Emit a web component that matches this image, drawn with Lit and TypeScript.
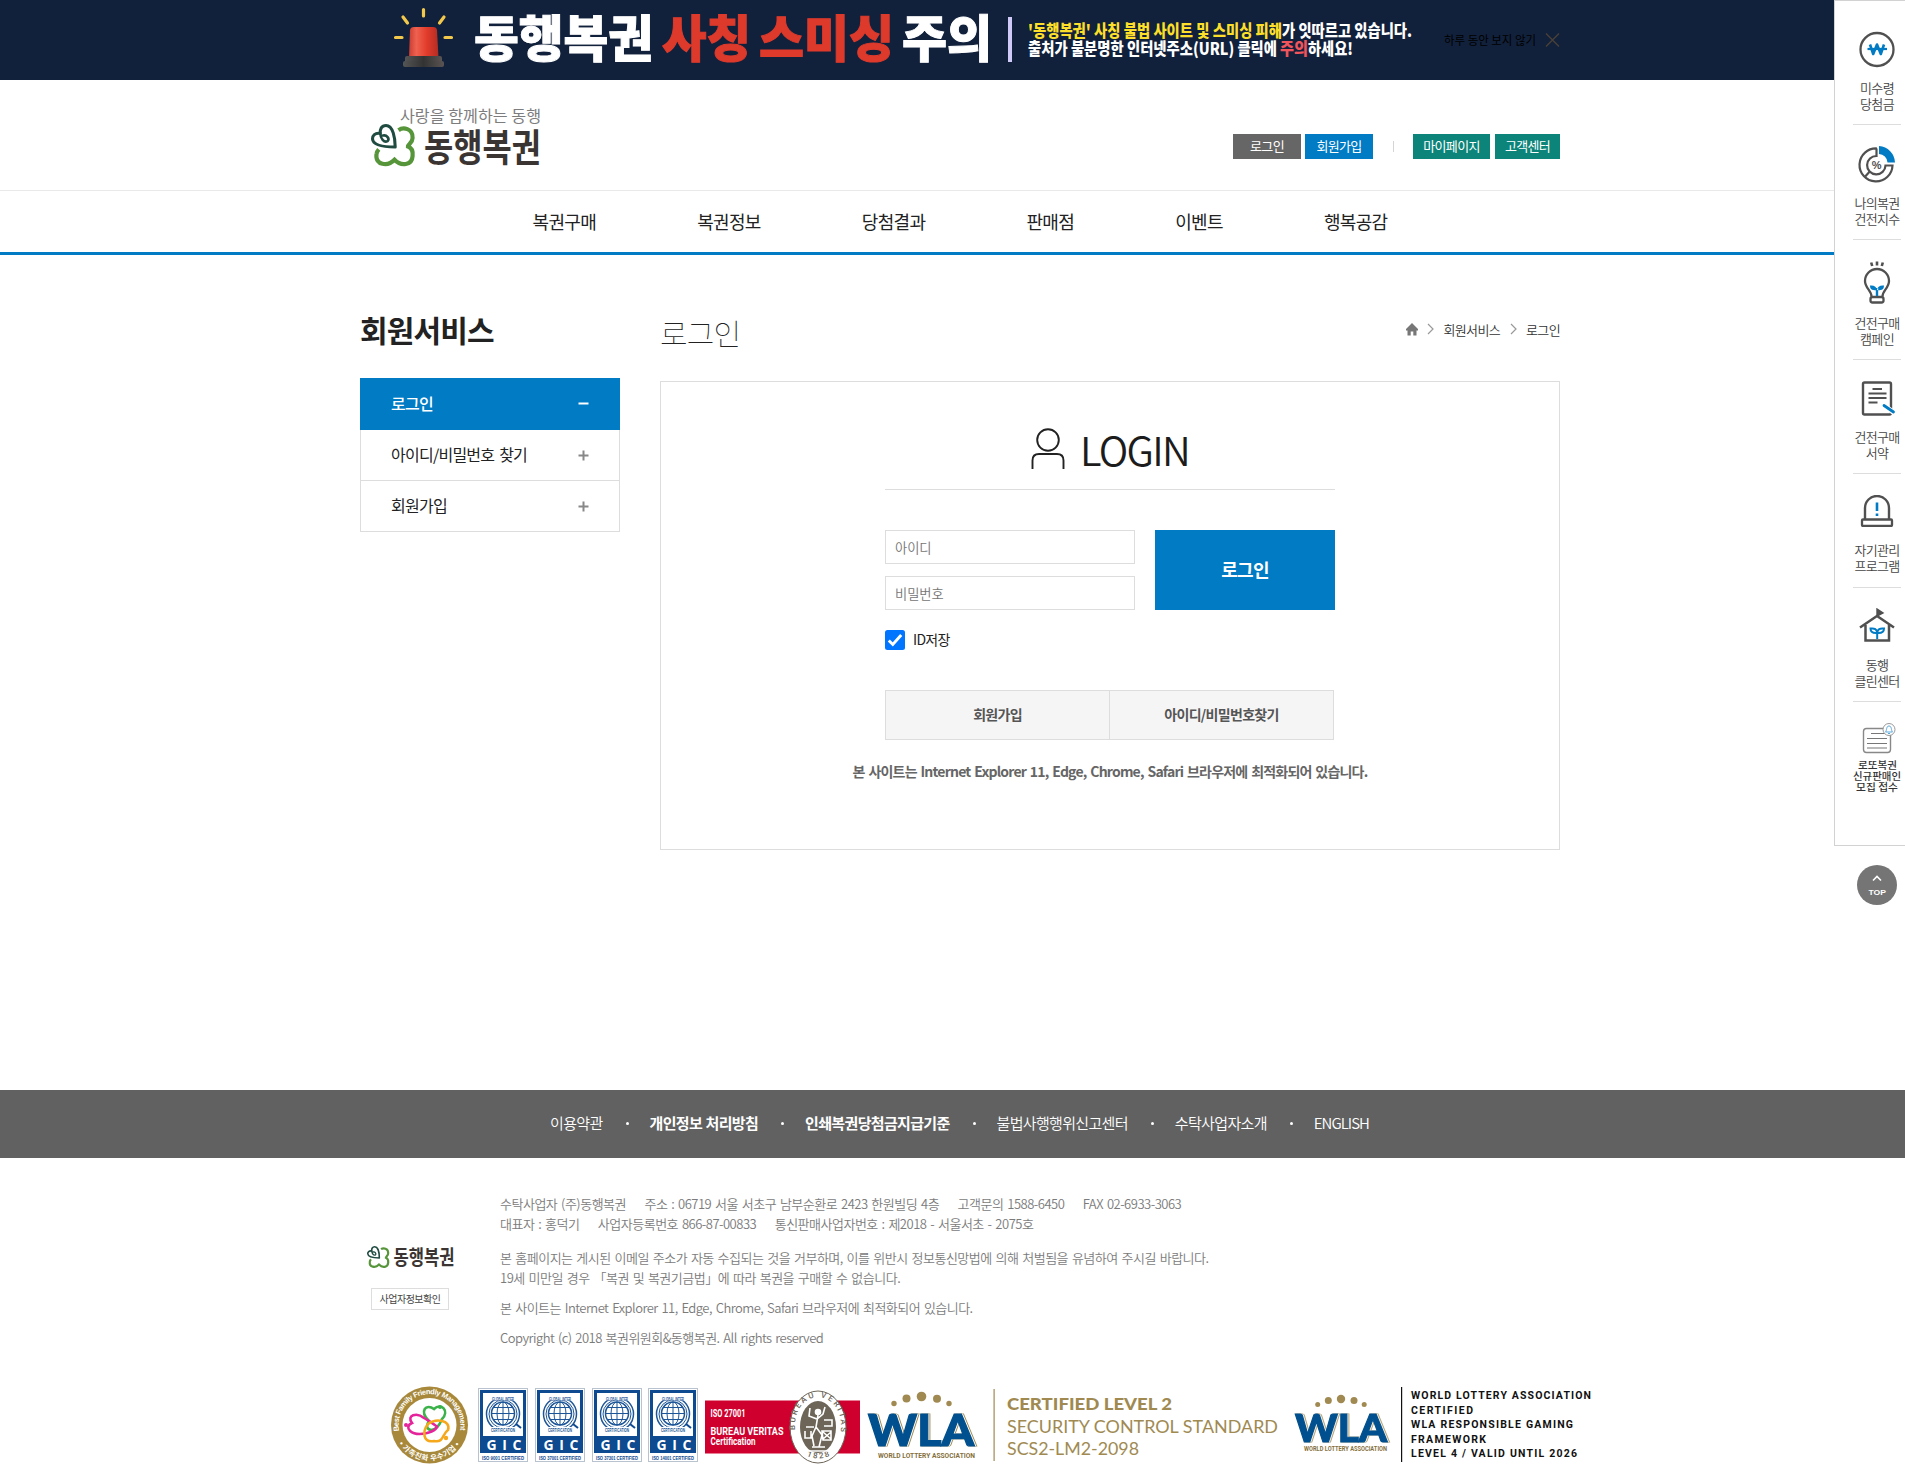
import { LitElement, html, css, svg } from "lit";
import { customElement } from "lit/decorators.js";

const INK = "#505050";
const BLUE = "#007bc4";
const GOLD = "#a08a52";

const clover = svg`
  <path d="M27.500 6.200C32 3 42 4 41.600 14 41.500 19 37 20 37 22.600 41 24 42 28 41.600 32 41 41.500 30 42.600 23.500 35.800 17 42.600 3.800 41.500 5.500 30 5.700 28.300 6.400 27 7.800 25.400" fill="none" stroke="#56953a" stroke-width="4.200"/>
  <path d="M24.200 23C24.200 14 22 1.500 15 1.500 10.500 1.500 8.800 5.200 9.300 9.500 4 8.500 1.300 11.800 1.500 15 2 21 12 23 24.200 23Z" fill="none" stroke="#1f4b40" stroke-width="3.100" stroke-linejoin="round"/>
  <path d="M9.300 9.500C9.500 14.500 13 19 16.500 17.200 19 15 15.800 10.500 12 11.500" fill="none" stroke="#1f4b40" stroke-width="2.600" stroke-linecap="round"/>`;

type Item = { icon: unknown; lines: string[]; h: number; pad: number; gap: number };

const sideItems: Item[] = [
  {
    lines: ["미수령", "당첨금"], h: 124, pad: 30, gap: 12,
    icon: svg`<svg width="38" height="37" viewBox="0 0 38 37">
      <circle cx="19" cy="18.500" r="16.500" fill="none" stroke="${INK}" stroke-width="2.300"/>
      <path d="M12 13.500l3.200 9.500 3.800-9.500 3.800 9.500 3.200-9.500" fill="none" stroke="${BLUE}" stroke-width="2.600" stroke-linejoin="round"/>
      <path d="M9.500 18H29" stroke="${BLUE}" stroke-width="2.200"/></svg>`,
  },
  {
    lines: ["나의복권", "건전지수"], h: 115, pad: 20, gap: 12,
    icon: svg`<svg width="38" height="38" viewBox="0 0 38 38">
      <path d="M19 3.500A16.500 16.500 0 1 0 34.500 20.500H27.500A9.200 9.200 0 1 1 18.500 11V3.500Z" fill="none" stroke="${INK}" stroke-width="2.200"/>
      <path d="M7.200 31.500l5-5.500" stroke="${INK}" stroke-width="2.200"/>
      <path d="M21 1A17 17 0 0 1 37 17.500H29.500A9 9 0 0 0 21 9Z" fill="${BLUE}"/>
      <text x="18.700" y="24" text-anchor="middle" class="pct">%</text></svg>`,
  },
  {
    lines: ["건전구매", "캠페인"], h: 120, pad: 21, gap: 11,
    icon: svg`<svg width="38" height="43" viewBox="0 0 38 43">
      <path d="M19 .5V4.500M13.200 1.500l1 3.500M24.800 1.500l-1 3.500" stroke="${INK}" stroke-width="2.600"/>
      <path d="M13.500 35.500C13.500 29.500 7 27 7 20A12 12 0 0 1 31 20C31 27 24.500 29.500 24.500 35.500" fill="none" stroke="${INK}" stroke-width="2.300"/>
      <rect x="12.500" y="36" width="13" height="5.500" rx="2" fill="none" stroke="${INK}" stroke-width="2.300"/>
      <path d="M19 29C12.500 30 12.200 27 12 24.500 16 24 18.500 25.500 19 29ZM19 29C25.500 30 25.800 27 26 24.500 22 24 19.500 25.500 19 29ZM17.800 27h2.400v8h-2.400z" fill="${BLUE}"/></svg>`,
  },
  {
    lines: ["건전구매", "서약"], h: 114, pad: 20, gap: 13,
    icon: svg`<svg width="38" height="36" viewBox="0 0 38 36">
      <rect x="5" y="2.500" width="28" height="32" rx="1.500" fill="none" stroke="${INK}" stroke-width="2.400"/>
      <path d="M14.500 9H24M10.500 13.500H28.500M10.500 18H28.500M10.500 22.500H19.500" stroke="${INK}" stroke-width="2.200"/>
      <path d="M25.500 25L35.500 32.500" stroke="#fff" stroke-width="5"/><path d="M26 25.500L35.500 32" stroke="${BLUE}" stroke-width="2.800" stroke-linecap="round"/></svg>`,
  },
  {
    lines: ["자기관리", "프로그램"], h: 114, pad: 21, gap: 15,
    icon: svg`<svg width="38" height="32" viewBox="0 0 38 32">
      <path d="M7 24V13A12 12 0 0 1 31 13V24" fill="none" stroke="${INK}" stroke-width="2.400"/>
      <rect x="4" y="24.500" width="30" height="6.500" rx="1" fill="none" stroke="${INK}" stroke-width="2.300"/>
      <path d="M19 7.500V16M19 18.500V21" stroke="${BLUE}" stroke-width="2.600"/></svg>`,
  },
  {
    lines: ["동행", "클린센터"], h: 114, pad: 20, gap: 15,
    icon: svg`<svg width="38" height="34" viewBox="0 0 38 34">
      <path d="M2 19.500L19 8 36 19.500M7.500 17V32.500H31V17" fill="none" stroke="${INK}" stroke-width="2.500"/>
      <path d="M19 9V1L25 5 19 8Z" fill="${INK}" stroke="${INK}" stroke-width="1.400"/>
      <path d="M19.200 31V23.500M19.200 25C13.500 25.500 12.500 22.500 12.500 20.500 16.500 20 19 21 19.200 25ZM19.200 25C25 25.500 26 22.500 26 20.500 22 20 19.500 21 19.200 25Z" fill="none" stroke="${BLUE}" stroke-width="2"/></svg>`,
  },
];

const gicCodes: [number, string][] = [
  [478, "ISO 9001 CERTIFIED"], [535, "ISO 37001 CERTIFIED"], [592, "ISO 37301 CERTIFIED"], [648, "ISO 14001 CERTIFIED"],
];

const gic = (x: number, label: string) => svg`<g transform="translate(${x} 1388)">
  <rect x=".5" y=".5" width="49" height="73" fill="#fff" stroke="#b9c3d0"/>
  <rect x="2" y="2" width="46" height="63" fill="#0d4a90"/>
  <rect x="5" y="5" width="40" height="43" fill="#fff"/>
  <circle cx="25" cy="26" r="16.500" fill="none" stroke="#1d5698" stroke-width="1.500"/>
  <circle cx="25" cy="26" r="14" fill="none" stroke="#1d5698" stroke-width="1"/>
  <rect x="14" y="7.500" width="22" height="5" fill="#fff"/><rect x="14" y="39" width="22" height="5" fill="#fff"/>
  <text x="14" y="12.500" textLength="22" lengthAdjust="spacingAndGlyphs" class="tiny">GLOBAL INTER</text>
  <text x="13" y="43.500" textLength="24" lengthAdjust="spacingAndGlyphs" class="tiny">CERTIFICATION</text>
  <circle cx="25" cy="25.500" r="11.500" fill="#fff" stroke="#1d5698" stroke-width="1.500"/>
  <path d="M25 14v23M13.500 25.500h23M15.500 19.500h19M15.500 31.500h19" stroke="#1d5698" stroke-width="1"/>
  <ellipse cx="25" cy="25.500" rx="6" ry="11.500" fill="none" stroke="#1d5698" stroke-width="1"/>
  <path d="M38 36l5 4" stroke="#0d4a90" stroke-width="2"/>
  <text x="8.500" y="61.500" textLength="35" class="gic">GIC</text>
  <text x="4" y="71.500" textLength="42" lengthAdjust="spacingAndGlyphs" class="iso">${label}</text>
</g>`;

const wla = (x: number, w: number, top: number, h: number) => svg`
  <g transform="translate(${x} ${top}) scale(${w / 108} ${h / 31})">
    <text x="0" y="31" textLength="106" lengthAdjust="spacingAndGlyphs" class="wla">WLA</text>
  </g>`;

@customElement("app-root")
export class AppRoot extends LitElement {
  static styles = css`
    :host {
      display: block; position: relative; width: 1905px; height: 1467px; overflow: hidden;
      background: #fff; color: #222; font-family: "Noto Sans CJK KR", "Noto Sans", sans-serif; font-size: 13px;
    }
    * { box-sizing: border-box; }
    svg { display: block; flex: none; }
    .wrap { width: 1200px; margin-left: 360px; }
    .banner { height: 80px; background: #12213b; }
    .banner-in { display: flex; }
    .b-big { font-weight: 900; font-size: 50px; stroke-width: 1; }
    .b-small { font-weight: 900; font-size: 16.500px; }
    .b-close { font-size: 12px; fill: #000; }
    .head { height: 110px; display: flex; justify-content: space-between; }
    .util { display: flex; align-items: center; margin-top: 54px; height: 25px; font-size: 13px; letter-spacing: -0.650px; color: #fff; }
    .util span { height: 25px; line-height: 24px; text-align: center; }
    .u1 { width: 68px; background: #666; margin-right: 4px; }
    .u2 { width: 68px; background: #007bc4; margin-right: 20px; }
    .util .bar { width: 1px; height: 11px; background: #d5d5d5; margin-right: 19px; }
    .u3 { width: 77px; background: #0c8479; margin-right: 5px; }
    .u4 { width: 65px; background: #0c8479; }
    .nav { border-top: 1px solid #e9e9e9; border-bottom: 3px solid #007bc4; height: 65px; }
    .nav-in { display: flex; gap: 101px; padding-left: 172.500px; font-size: 18px; font-weight: 400; letter-spacing: -0.650px; line-height: 61px; }
    .main { display: flex; gap: 40px; height: 835px; }
    .aside { width: 260px; padding-top: 49px; }
    .aside h2 { margin: 0; font-size: 30px; line-height: 50px; font-weight: 700; letter-spacing: -0.875px; height: 74px; }
    .menu { display: flex; flex-direction: column; font-size: 16px; letter-spacing: -0.750px; word-spacing: 2px; }
    .mi { display: flex; justify-content: space-between; align-items: center; height: 51px; padding: 0 30px; border: 1px solid #ddd; border-top: 0; color: #222; font-weight: 400; }
    .mi span { padding-bottom: 2px; }
    .mi.on { height: 52px; background: #007bc4; border-color: #007bc4; color: #fff; font-weight: 500; }
    .content { width: 900px; padding-top: 49px; }
    .title-row { display: flex; justify-content: space-between; height: 77px; }
    .title-row h3 { margin: 0; font-size: 30px; font-weight: 100; letter-spacing: -0.900px; line-height: 56px; }
    .crumb { display: flex; align-items: center; gap: 9.500px; height: 50px; font-size: 13px; font-weight: 350; letter-spacing: -0.650px; color: #333; }
    .box { border: 1px solid #ddd; height: 469px; display: flex; flex-direction: column; align-items: center; }
    .form { width: 450px; display: flex; flex-direction: column; }
    .login-h { display: flex; justify-content: center; height: 108px; border-bottom: 1px solid #ddd; padding-top: 46px; gap: 15px; }
    .login-h span { font-size: 40px; font-weight: 350; letter-spacing: -1.700px; line-height: 43px; color: #1c1c1c; }
    .fields { display: flex; justify-content: space-between; margin-top: 40px; height: 80px; }
    .col { display: flex; flex-direction: column; gap: 12px; }
    .in { width: 250px; height: 34px; border: 1px solid #ddd; padding-left: 9px; line-height: 33px; font-size: 13.300px; letter-spacing: -0.100px; color: #757575; font-weight: 350; }
    .btn { width: 180px; background: #007bc4; color: #fff; font-size: 18px; font-weight: 700; letter-spacing: -0.800px; text-align: center; line-height: 78px; }
    .save { display: flex; align-items: center; gap: 8px; margin-top: 20px; height: 20px; font-size: 14px; letter-spacing: -0.700px; color: #222; }
    .save span { padding-bottom: 3px; }
    .two { display: flex; width: 449px; height: 50px; margin-top: 40px; border: 1px solid #ddd; background: #f5f5f5; line-height: 46px; text-align: center; font-size: 14px; font-weight: 700; letter-spacing: -0.700px; color: #555; }
    .two span { flex: 1; }
    .two span + span { border-left: 1px solid #ddd; }
    .opt { margin-top: 19px; line-height: 24px; font-size: 14px; font-weight: 700; letter-spacing: -0.800px; word-spacing: 1.400px; color: #666; white-space: nowrap; }
    .fnav { height: 68px; background: #616161; color: #fff; }
    .fnav-in { display: flex; align-items: center; padding-left: 190px; height: 64px; font-size: 15px; font-weight: 350; letter-spacing: -0.668px; white-space: nowrap; }
    .fnav-in b { font-weight: 700; word-spacing: 0.800px; }
    .fnav-in .en { letter-spacing: -0.950px; }
    .fnav-in i { width: 3px; height: 3px; border-radius: 50%; background: #fff; margin: 2px 20.800px 0 23.200px; }
    .foot { display: flex; height: 220px; }
    .fl { width: 140px; padding: 88px 0 0 7px; display: flex; flex-direction: column; gap: 20px; }
    .flogo { overflow: visible; }
    .chk { width: 78px; height: 22px; margin-left: 4px; border: 1px solid #ddd; text-align: center; font-size: 10px; line-height: 20px; letter-spacing: -0.500px; color: #444; }
    .fr { padding-top: 36px; line-height: 20px; font-size: 13px; font-weight: 350; letter-spacing: -0.500px; word-spacing: 1.400px; color: #7b7b7b; white-space: nowrap; }
    .fr p { margin: 0 0 14px; }
    .fr .t { margin-bottom: 10px; }
    .fr .lat { letter-spacing: -0.530px; }
    .fr p > span { margin-right: 18.500px; }
    .logos { display: flex; height: 89px; }
    .pct { font: 700 11px "Liberation Sans", sans-serif; fill: #505050; }
    .side { position: absolute; right: 0; top: 0; width: 71px; height: 846px; background: #fff; border: 1px solid #d2d2d2; border-right: 0; padding-left: 18px; }
    .si { width: 48px; display: flex; flex-direction: column; align-items: center; border-bottom: 1px solid #ddd; }
    .si p { margin: 0; text-align: center; font-size: 13px; font-weight: 350; line-height: 16px; letter-spacing: -0.650px; color: #444; white-space: nowrap; }
    .last { padding-top: 20px; }
    .new { font-size: 10px; font-weight: 500; fill: #333; }
    .top { position: absolute; left: 1857px; top: 865px; }
    .topt { font: 700 8px "Liberation Sans", sans-serif; fill: #fff; }
    .slog { font-size: 16px; fill: #7d7d7d; }
    .name { font-weight: 700; font-size: 38px; fill: #3a3532; }
    .name.sm { font-size: 20px; }
    .tiny { font: 700 5px "Liberation Sans", sans-serif; fill: #1d5698; }
    .iso { font: 700 5px "Liberation Sans", sans-serif; fill: #0d4a90; }
    .gic { font: 700 14px "Open Sans", sans-serif; fill: #fff; }
    .wla { font: 900 43px Lato, sans-serif; fill: #00508f; stroke: #00508f; stroke-width: 1.200; filter: drop-shadow(1.200px 0 0 #fff) drop-shadow(1.200px 0 0 #a08a52); }
    .cap { font: 700 8px Roboto, sans-serif; fill: #85703c; }
    .cap.sm { font-size: 7px; }
    .bv { font: 700 10px Roboto, sans-serif; fill: #fff; }
    .ring { font: 500 8px Roboto, sans-serif; fill: #6c6558; }
    .lv { font: 400 17.500px Lato, sans-serif; fill: #a08a52; }
    .lv.b { font-weight: 900; }
    .din { font: 700 10.500px Roboto, sans-serif; fill: #111; }
    .fam { font: 700 7.500px "Liberation Sans", sans-serif; fill: #fff; }
    .fam.k { font-family: "Noto Sans CJK KR", sans-serif; }
  `;

  private banner() {
    return html`<svg width="1200" height="80" viewBox="360 0 1200 80">
      <defs><linearGradient id="sg"><stop offset="0" stop-color="#c93d31"/><stop offset=".25" stop-color="#f0614f"/><stop offset=".6" stop-color="#e23c2c"/><stop offset="1" stop-color="#b42c22"/></linearGradient>
      <linearGradient id="sb"><stop offset="0" stop-color="#555"/><stop offset=".5" stop-color="#333"/><stop offset="1" stop-color="#5a5453"/></linearGradient></defs>
      <path d="M423.500 9.500V16M403 17l4.500 6M444 17l-4.500 6M395.500 37.500H402M445 37.500H451.500" stroke="#f2c94c" stroke-width="3.200" stroke-linecap="round"/>
      <path d="M410 30Q410.500 27 414 27H433Q436.500 27 437 30L438.500 58H409Z" fill="url(#sg)"/>
      <rect x="405" y="56" width="37" height="6.500" rx="2" fill="url(#sb)"/><rect x="403" y="61" width="41" height="6" rx="2" fill="url(#sb)"/>
      <text x="474" y="57" textLength="179" lengthAdjust="spacingAndGlyphs" class="b-big" fill="#fff" stroke="#fff">동행복권</text>
      <text x="662" y="57" textLength="89" lengthAdjust="spacingAndGlyphs" class="b-big" fill="#de3a2b" stroke="#de3a2b">사칭</text>
      <text x="759" y="57" textLength="135" lengthAdjust="spacingAndGlyphs" class="b-big" fill="#de3a2b" stroke="#de3a2b">스미싱</text>
      <text x="902" y="57" textLength="90" lengthAdjust="spacingAndGlyphs" class="b-big" fill="#fff" stroke="#fff">주의</text>
      <rect x="1008" y="17" width="4" height="45" fill="#cfcaf8"/>
      <text x="1028" y="36.500" textLength="254" lengthAdjust="spacingAndGlyphs" class="b-small" fill="#fbdf2a">'동행복권' 사칭 불법 사이트 및 스미싱 피해</text>
      <text x="1282" y="36.500" textLength="130" lengthAdjust="spacingAndGlyphs" class="b-small" fill="#fff">가 잇따르고 있습니다.</text>
      <text x="1028" y="54.500" textLength="249" lengthAdjust="spacingAndGlyphs" class="b-small" fill="#fff">출처가 불분명한 인터넷주소(URL) 클릭에</text>
      <text x="1280" y="54.500" textLength="28" lengthAdjust="spacingAndGlyphs" class="b-small" fill="#f2545b">주의</text>
      <text x="1308" y="54.500" textLength="45" lengthAdjust="spacingAndGlyphs" class="b-small" fill="#fff">하세요!</text>
      <text x="1444" y="45" textLength="92" lengthAdjust="spacingAndGlyphs" class="b-close">하루 동안 보지 않기</text>
      <path d="M1546 33.500l13 13M1559 33.500l-13 13" stroke="#4a4038" stroke-width="1.300"/>
    </svg>`;
  }

  private logo() {
    return html`<svg width="200" height="110" viewBox="360 80 200 110">
      <text x="400" y="121.500" textLength="141" lengthAdjust="spacingAndGlyphs" class="slog">사랑을 함께하는 동행</text>
      <g transform="translate(371 124)">${clover}</g>
      <text x="424" y="161" textLength="117" lengthAdjust="spacingAndGlyphs" class="name">동행복권</text>
    </svg>`;
  }

  private logos() {
    const dots = (pts: number[][]) => pts.map((p) => svg`<circle cx="${p[0]}" cy="${p[1]}" r="${p[2]}" fill="${GOLD}"/>`);
    return html`<svg width="1260" height="89" viewBox="360 1378 1260 89">
      <defs><path id="a1" d="M399.500 1433A31 31 0 1 1 459.500 1433"/><path id="a2" d="M397 1440A36 36 0 0 0 462 1440"/>
      <path id="a3" d="M795.500 1434C789 1385 847 1385 840.500 1434"/><path id="a4" d="M803 1454Q818 1463 834 1454"/></defs>
      <circle cx="429.500" cy="1425" r="38.500" fill="#a8893c"/><circle cx="429.500" cy="1425" r="27" fill="#fff"/>
      <text class="fam"><textPath href="#a1" textLength="108" startOffset="2">Best Family Friendly Management</textPath></text>
      <text class="fam k"><textPath href="#a2" textLength="72" startOffset="4">• 가족친화 우수기업 •</textPath></text>
      <g fill="none" stroke-width="2.600">
        <path d="M429 1421C419 1411 426 1403 434 1409 441 1402 450 1411 442 1419 440 1424 437 1430 431 1430 425 1429 427 1424 429 1421Z" stroke="#3cb24a"/>
        <path d="M427 1433C411 1437 403 1427 412 1423 406 1415 417 1412 424 1418 432 1423 436 1425 437 1427 434 1432 430 1432 427 1433Z" stroke="#e5249b"/>
        <path d="M428 1424C436 1418 451 1420 448 1430 442 1434 444 1443 434 1441 423 1443 422 1432 428 1424Z" stroke="#f5a81c"/>
      </g>
      <circle cx="440" cy="1407" r="2" fill="#3cb24a"/><circle cx="406" cy="1425" r="2" fill="#e5249b"/><circle cx="446" cy="1438" r="2.200" fill="#f5a81c"/>
      ${gicCodes.map(([x, l]) => gic(x, l))}
      <rect x="705" y="1400.500" width="155" height="53" fill="#cf002d"/>
      <ellipse cx="818" cy="1427" rx="28" ry="36" fill="#fff" stroke="#6c6558" stroke-width="1"/>
      <ellipse cx="818" cy="1427" rx="18" ry="26" fill="#6c6558"/>
      <text x="710.500" y="1416.500" textLength="35" lengthAdjust="spacingAndGlyphs" class="bv">ISO 27001</text>
      <text x="710.500" y="1434.500" textLength="73" lengthAdjust="spacingAndGlyphs" class="bv">BUREAU VERITAS</text>
      <text x="710.500" y="1445" textLength="45" lengthAdjust="spacingAndGlyphs" class="bv">Certification</text>
      <text class="ring"><textPath href="#a3" textLength="92" startOffset="4">BUREAU VERITAS</textPath></text>
      <text class="ring"><textPath href="#a4" textLength="24" startOffset="4">1828</textPath></text>
      <g stroke="#fff" fill="none" stroke-width="1.600">
        <circle cx="818" cy="1412" r="2.500" fill="#fff"/><path d="M818 1415l-2 12 6 8-3 12M816 1427l-4 9 2 10M810 1408l-1 8 8 3 6-5 2-7M812 1447h13M809 1451h19M806 1427h8M805 1431v7h6v-7M822 1431h9v9h-8zM824 1420h8v6h-8M823 1432l8 7M831 1432l-8 7"/>
      </g>
      ${dots([[894, 1403.500, 2.700], [906.500, 1398.500, 4], [921.500, 1396.500, 4.800], [937, 1398.800, 4], [949, 1403.500, 2.700]])}
      ${wla(868, 108, 1415, 31)}
      <text x="878" y="1457.500" textLength="97" lengthAdjust="spacingAndGlyphs" class="cap">WORLD LOTTERY ASSOCIATION</text>
      <rect x="993.500" y="1389" width="1.200" height="72" fill="${GOLD}"/>
      <text x="1007" y="1410" textLength="165" lengthAdjust="spacingAndGlyphs" class="lv b">CERTIFIED LEVEL 2</text>
      <text x="1007" y="1432.500" textLength="271" lengthAdjust="spacingAndGlyphs" class="lv">SECURITY CONTROL STANDARD</text>
      <text x="1007" y="1454.500" textLength="132" lengthAdjust="spacingAndGlyphs" class="lv">SCS2-LM2-2098</text>
      ${dots([[1317.700, 1404.500, 2.500], [1328.300, 1400.500, 3.500], [1341, 1399, 4.200], [1354, 1400.500, 3.500], [1364.200, 1404.500, 2.500]])}
      ${wla(1295, 94, 1414.500, 27)}
      <text x="1304" y="1451" textLength="83" lengthAdjust="spacingAndGlyphs" class="cap sm">WORLD LOTTERY ASSOCIATION</text>
      <rect x="1401" y="1387" width="1.200" height="75" fill="#111"/>
      <text x="1411" y="1398.500" textLength="180" class="din">WORLD LOTTERY ASSOCIATION</text>
      <text x="1411" y="1413.500" textLength="62" class="din">CERTIFIED</text>
      <text x="1411" y="1428" textLength="162" class="din">WLA RESPONSIBLE GAMING</text>
      <text x="1411" y="1442.500" textLength="75" class="din">FRAMEWORK</text>
      <text x="1411" y="1457" textLength="166" class="din">LEVEL 4 / VALID UNTIL 2026</text>
    </svg>`;
  }

  private sign(minus: boolean) {
    return html`<svg width="11" height="11" viewBox="0 0 11 11"><path d="${minus ? "M.5 5.500H10.500" : "M.5 5.500H10.500M5.500 .5V10.500"}" stroke="${minus ? "#fff" : "#888"}" stroke-width="2"/></svg>`;
  }

  render() {
    const arrow = html`<svg width="7" height="12" viewBox="0 0 7 12"><path d="M1 1l5 5-5 5" fill="none" stroke="#999" stroke-width="1.200"/></svg>`;
    const menu = ["로그인", "아이디/비밀번호 찾기", "회원가입"];
    return html`
      <div class="banner"><div class="wrap banner-in">${this.banner()}</div></div>
      <div class="wrap head">${this.logo()}
        <div class="util"><span class="u1">로그인</span><span class="u2">회원가입</span><i class="bar"></i><span class="u3">마이페이지</span><span class="u4">고객센터</span></div>
      </div>
      <div class="nav"><div class="wrap nav-in">${["복권구매", "복권정보", "당첨결과", "판매점", "이벤트", "행복공감"].map((t) => html`<span>${t}</span>`)}</div></div>
      <div class="wrap main">
        <div class="aside"><h2>회원서비스</h2>
          <div class="menu">${menu.map((t, i) => html`<div class="mi ${i ? "" : "on"}"><span>${t}</span>${this.sign(i === 0)}</div>`)}</div>
        </div>
        <div class="content">
          <div class="title-row"><h3>로그인</h3>
            <div class="crumb">
              <svg width="12" height="13" viewBox="0 0 12 13"><path d="M6 0L12 6V7.500H10.500V12.500H7.300V8.500H4.700V12.500H1.500V7.500H0V6Z" fill="#777"/></svg>
              ${arrow}<span>회원서비스</span>${arrow}<span>로그인</span>
            </div>
          </div>
          <div class="box">
            <div class="form">
              <div class="login-h">
                <svg width="34" height="42" viewBox="0 0 34 42"><ellipse cx="17" cy="12" rx="10.800" ry="10.700" fill="none" stroke="#222" stroke-width="1.900"/><path d="M1.500 41V32.500Q1.500 26 8 26H26Q32.500 26 32.500 32.500V41" fill="none" stroke="#222" stroke-width="1.900"/></svg>
                <span>LOGIN</span></div>
              <div class="fields"><div class="col"><div class="in">아이디</div><div class="in">비밀번호</div></div><div class="btn">로그인</div></div>
              <div class="save"><svg width="20" height="20" viewBox="0 0 20 20"><rect width="20" height="20" rx="2.500" fill="#0075ff"/><path d="M3.800 10.500L7.800 14.500 16.200 5" fill="none" stroke="#fff" stroke-width="2.900"/></svg><span>ID저장</span></div>
              <div class="two"><span>회원가입</span><span>아이디/비밀번호찾기</span></div>
            </div>
            <div class="opt">본 사이트는 Internet Explorer 11, Edge, Chrome, Safari 브라우저에 최적화되어 있습니다.</div>
          </div>
        </div>
      </div>
      <div class="fnav"><div class="wrap fnav-in"><span>이용약관</span><i></i><b>개인정보 처리방침</b><i></i><b>인쇄복권당첨금지급기준</b><i></i><span>불법사행행위신고센터</span><i></i><span>수탁사업자소개</span><i></i><span class="en">ENGLISH</span></div></div>
      <div class="wrap foot">
        <div class="fl">
          <svg class="flogo" width="90" height="22" viewBox="0 0 90 22"><g transform="scale(.51 .52)">${clover}</g><text x="26.500" y="19.300" textLength="61" lengthAdjust="spacingAndGlyphs" class="name sm">동행복권</text></svg>
          <div class="chk">사업자정보확인</div>
        </div>
        <div class="fr">
          <p><span>수탁사업자 (주)동행복권</span><span>주소 : 06719 서울 서초구 남부순환로 2423 한원빌딩 4층</span><span>고객문의 1588-6450</span><span>FAX 02-6933-3063</span><br><span>대표자 : 홍덕기</span><span>사업자등록번호 866-87-00833</span><span>통신판매사업자번호 : 제2018 - 서울서초 - 2075호</span></p>
          <p class="t">본 홈페이지는 게시된 이메일 주소가 자동 수집되는 것을 거부하며, 이를 위반시 정보통신망법에 의해 처벌됨을 유념하여 주시길 바랍니다.<br>19세 미만일 경우 「복권 및 복권기금법」에 따라 복권을 구매할 수 없습니다.</p>
          <p class="t lat">본 사이트는 Internet Explorer 11, Edge, Chrome, Safari 브라우저에 최적화되어 있습니다.</p>
          <p class="t lat">Copyright (c) 2018 복권위원회&amp;동행복권. All rights reserved</p>
        </div>
      </div>
      <div class="wrap logos">${this.logos()}</div>
      <div class="side">
        ${sideItems.map((s) => html`<div class="si" style="height:${s.h}px;padding-top:${s.pad}px;gap:${s.gap}px">${s.icon}<p>${s.lines[0]}<br>${s.lines[1]}</p></div>`)}
        <div class="last"><svg width="52" height="75" viewBox="1853 722 52 75">
          <rect x="1863.500" y="728.500" width="27" height="24" rx="3" fill="#fff" stroke="#888" stroke-width="1.400"/>
          <path d="M1871 733.500H1885M1867 738.500H1887M1867 743.500H1887M1867 748H1887" stroke="#777" stroke-width="1.200"/>
          <circle cx="1889" cy="729.500" r="6" fill="#fff" stroke="#999"/><path d="M1885.500 732C1887 730.500 1886 726 1889 726S1891 730.500 1892.500 732ZM1888 733.500h2" fill="none" stroke="#5aa7dc" stroke-width="1"/>
          <text x="1858" y="768.500" textLength="39" lengthAdjust="spacingAndGlyphs" class="new">로또복권</text>
          <text x="1853" y="779.500" textLength="48" lengthAdjust="spacingAndGlyphs" class="new">신규판매인</text>
          <text x="1856" y="791" textLength="42" lengthAdjust="spacingAndGlyphs" class="new">모집 접수</text>
        </svg></div>
      </div>
      <svg class="top" width="40" height="40" viewBox="0 0 40 40"><circle cx="20" cy="20" r="20" fill="#757575"/><path d="M16 15.500l4-4 4 4" fill="none" stroke="#fff" stroke-width="1.600"/><text x="11.500" y="29.500" textLength="17.500" lengthAdjust="spacingAndGlyphs" class="topt">TOP</text></svg>
    `;
  }
}
